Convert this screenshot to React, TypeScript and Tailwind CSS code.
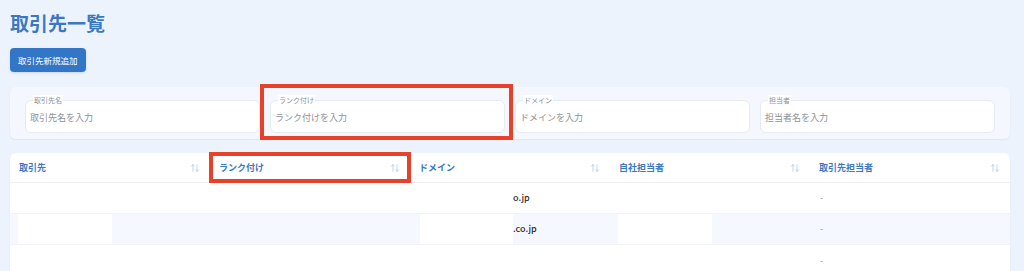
import React from 'react';
import { ArrowUpDown } from 'lucide-react';

const filters = [
  { label: '取引先名', placeholder: '取引先名を入力' },
  { label: 'ランク付け', placeholder: 'ランク付けを入力', marked: true },
  { label: 'ドメイン', placeholder: 'ドメインを入力' },
  { label: '担当者', placeholder: '担当者名を入力' },
];

const columns = ['取引先', 'ランク付け', 'ドメイン', '自社担当者', '取引先担当者'];

function FilterInput({ label, placeholder }: { label: string; placeholder: string }) {
  return (
    <div className="relative h-[33px] flex-1 rounded-md border border-[#e6ebf3] bg-white">
      <span className="absolute -top-[6px] left-[7px] bg-white px-[1px] text-[7px] leading-[10px] text-[#8a8f99]">
        {label}
      </span>
      <div className="flex h-full items-center pt-[4px] pl-[4px] text-[9px] text-[#8d929b]">{placeholder}</div>
    </div>
  );
}

export default function App() {
  return (
    <div className="h-[271px] overflow-hidden bg-[#edf3fd] px-[10px] pt-[11px] font-['Noto_Sans_CJK_JP',sans-serif]">
      <h1 className="text-[19px] leading-[24px] font-bold text-[#3a78c4]">取引先一覧</h1>
      <button className="mt-[13px] h-[24px] rounded-[4px] bg-[#3276c7] px-[8px] text-[8.5px] text-white shadow-sm">
        取引先新規追加
      </button>

      <div className="mt-[15px] flex h-[52px] w-[1000px] items-center gap-[10px] rounded-md bg-[#f4f8fe] px-[15px] pt-[6px] shadow-[0_1px_2px_rgba(0,0,0,0.06)]">
        {filters.map((f) => (
          <div key={f.label} className="relative flex flex-1">
            <FilterInput label={f.label} placeholder={f.placeholder} />
            {f.marked && (
              <div className="pointer-events-none absolute -top-[16px] -right-[8px] -bottom-[7px] -left-[10px] border-[4px] border-[#e8412a]" />
            )}
          </div>
        ))}
      </div>

      <div className="mt-[14px] w-[1000px] rounded-t-md bg-white shadow-[0_1px_2px_rgba(0,0,0,0.05)]">
        <div className="grid h-[30px] grid-cols-5 border-b border-[#eef0f3]">
          {columns.map((c, i) => (
            <div key={c} className="relative flex items-center justify-between pr-[10px] pl-[9px]">
              <span className="text-[9px] font-bold text-[#3a78c4]">{c}</span>
              <ArrowUpDown size={10} strokeWidth={1.5} className="text-[#a4bddd]" />
              {i === 1 && (
                <div className="pointer-events-none absolute -top-[1px] -right-[1px] -bottom-[1px] -left-[1px] border-[4px] border-[#e8412a]" />
              )}
            </div>
          ))}
        </div>

        <div className="grid h-[31px] grid-cols-5 items-center border-b border-[#f1f3f6] text-[9px] text-[#2d2f33]">
          <div />
          <div />
          <div className="pl-[103px] font-medium">o.jp</div>
          <div />
          <div className="pl-[10px] text-[#8d929b]">-</div>
        </div>

        <div className="flex h-[31px] items-stretch border-b border-[#f1f3f6] bg-[#f5f8fe] text-[9px] text-[#2d2f33]">
          <div className="w-[8px]" />
          <div className="w-[94px] bg-white" />
          <div className="w-[308px]" />
          <div className="w-[93px] bg-white" />
          <div className="flex w-[105px] items-center font-medium">.co.jp</div>
          <div className="w-[94px] bg-white" />
          <div className="w-[98px]" />
          <div className="flex items-center pl-[10px] text-[#8d929b]">-</div>
        </div>

        <div className="grid h-[31px] grid-cols-5 items-center text-[9px]">
          <div />
          <div />
          <div />
          <div />
          <div className="pl-[10px] text-[#8d929b]">-</div>
        </div>
      </div>
    </div>
  );
}
